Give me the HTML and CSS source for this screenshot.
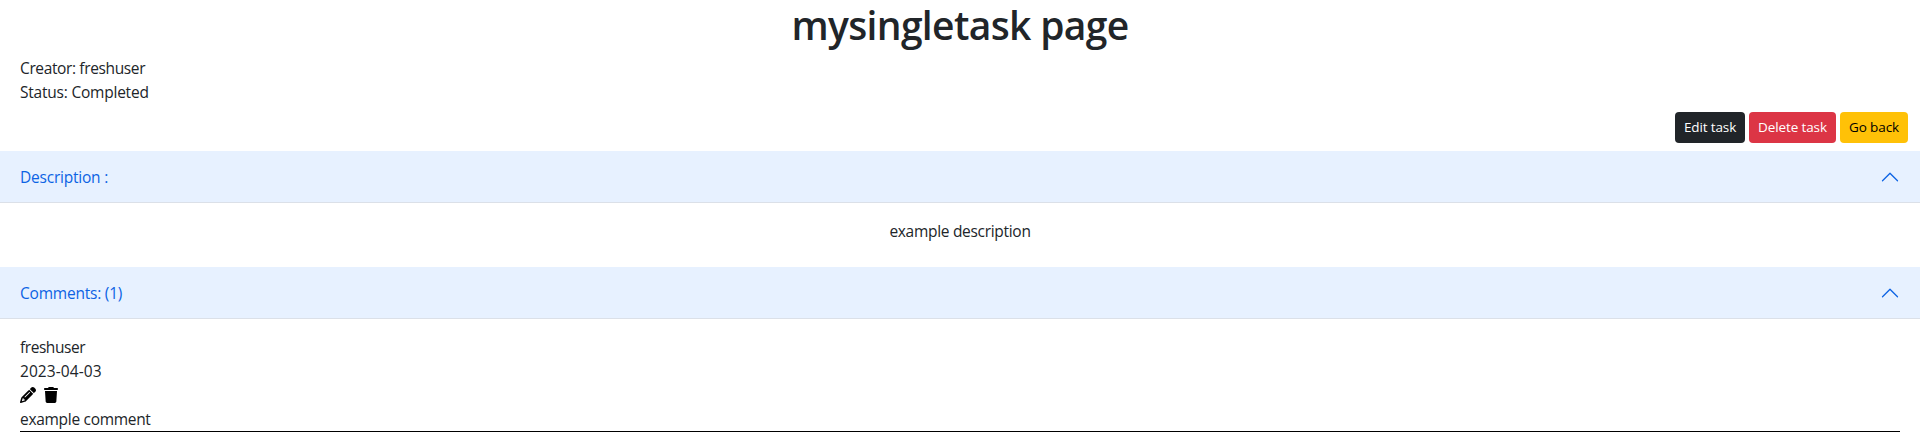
FILE: index.html
```html
<!DOCTYPE html>
<html lang="en">
<head>
<meta charset="utf-8">
<title>mysingletask page</title>
<link rel="stylesheet" href="styles.css">
</head>
<body>
<h1 class="title">mysingletask page</h1>
<div class="meta">
  <div><span class="creator">Creator: freshuser</span></div>
  <div><span class="status">Status: Completed</span></div>
</div>
<div class="actions">
  <button class="btn btn-dark">Edit task</button>
  <button class="btn btn-danger">Delete task</button>
  <button class="btn btn-warning">Go back</button>
</div>
<section>
  <button class="accordion-button"><span class="label">Description :</span>
    <svg class="chevron" viewBox="0 0 16 16"><path fill-rule="evenodd" d="M1.646 4.646a.5.5 0 0 1 .708 0L8 10.293l5.646-5.647a.5.5 0 0 1 .708.708l-6 6a.5.5 0 0 1-.708 0l-6-6a.5.5 0 0 1 0-.708z"/></svg>
  </button>
  <div class="panel description"><p>example description</p></div>
</section>
<section>
  <button class="accordion-button"><span class="label">Comments: (1)</span>
    <svg class="chevron" viewBox="0 0 16 16"><path fill-rule="evenodd" d="M1.646 4.646a.5.5 0 0 1 .708 0L8 10.293l5.646-5.647a.5.5 0 0 1 .708.708l-6 6a.5.5 0 0 1-.708 0l-6-6a.5.5 0 0 1 0-.708z"/></svg>
  </button>
  <div class="panel comments">
    <div class="comment">
      <div><span class="author">freshuser</span></div>
      <div><span class="date">2023-04-03</span></div>
      <div class="tools">
        <svg class="pencil" viewBox="0 0 512 512"><path d="M410.3 231l11.3-11.3-33.9-33.9-62.1-62.1L291.7 89.8l-11.3 11.3-22.6 22.6L58.6 322.9c-10.4 10.4-18 23.3-22.2 37.4L1 480.7c-2.5 8.4-.2 17.5 6.1 23.7s15.3 8.5 23.7 6.1l120.3-35.4c14.1-4.2 27-11.8 37.4-22.2L387.7 253.7 410.3 231zM160 399.4l-9.1 22.7c-4 3.1-8.5 5.4-13.3 6.9L59.4 452l23-78.1c1.4-4.9 3.8-9.4 6.9-13.3l22.7-9.1v32c0 8.8 7.2 16 16 16h32zM362.7 18.7L348.3 33.2 325.7 55.8 314.3 67.1l33.9 33.9 62.1 62.1 33.9 33.9 11.3-11.3 22.6-22.6 14.5-14.5c25-25 25-65.5 0-90.5L453.3 18.7c-25-25-65.5-25-90.5 0zm-47.4 168l-144 144c-6.2 6.2-16.4 6.2-22.6 0s-6.2-16.4 0-22.6l144-144c6.2-6.2 16.4-6.2 22.6 0s6.2 16.4 0 22.6z"/></svg>
        <svg class="trash" viewBox="0 0 448 512"><path d="M135.2 17.7L128 32H32C14.3 32 0 46.3 0 64S14.3 96 32 96H416c17.7 0 32-14.3 32-32s-14.3-32-32-32H320l-7.2-14.3C307.4 6.8 296.3 0 284.2 0H163.8c-12.1 0-23.2 6.8-28.6 17.7zM416 128H32L53.2 467c1.6 25.3 22.6 45 47.9 45H346.9c25.3 0 46.3-19.7 47.9-45L416 128z"/></svg>
      </div>
      <div><span class="text">example comment</span></div>
    </div>
  </div>
</section>
</body>
</html>
```
FILE: styles.css
```css
* { box-sizing: border-box; }
body { margin: 0; background: #fff; color: #212529; font: 400 15.5px/24px "Open Sans", "Noto Sans", sans-serif; letter-spacing: -0.3px; }
.title { margin: 0 0 8px; height: 48px; padding-top: 2px; font-size: 39px; line-height: 46px; font-weight: 600; letter-spacing: -0.65px; text-align: center; }
.meta { padding: 0 20px; }
.creator { letter-spacing: -0.37px; }
.status, .label { letter-spacing: -0.22px; }
.author { letter-spacing: -0.45px; }
.date { letter-spacing: 0.07px; }
.actions { display: flex; justify-content: flex-end; gap: 4px; padding: 8px 12px; }
.btn { height: 31px; padding: 0; border: 0; border-radius: 4px; font: 400 13.5px/31px "Open Sans", "Noto Sans", sans-serif; letter-spacing: -0.12px; text-align: center; white-space: nowrap; }
.btn-dark { width: 70px; background: #212529; color: #fff; }
.btn-danger { width: 87px; background: #dc3545; color: #fff; }
.btn-warning { width: 68px; background: #ffc107; color: #000; }
.accordion-button { display: flex; align-items: center; justify-content: space-between; width: 100%; height: 52px; padding: 0 20px; border: 0; background: #e7f1ff; color: #0c63e4; font: inherit; box-shadow: inset 0 -1px 0 #dbe0e8; }
.chevron { width: 20px; height: 20px; fill: #0c63e4; transform: rotate(180deg); }
.panel { padding: 16px 20px; }
.description { height: 64px; text-align: center; }
.description p { margin: 0; }
.comments { padding-bottom: 12px; }
.comment { height: 97px; border-bottom: 1px solid #000; }
.tools { display: flex; align-items: center; gap: 8px; height: 24px; }
.pencil { width: 16px; height: 16px; }
.trash { width: 14px; height: 16px; }
```
